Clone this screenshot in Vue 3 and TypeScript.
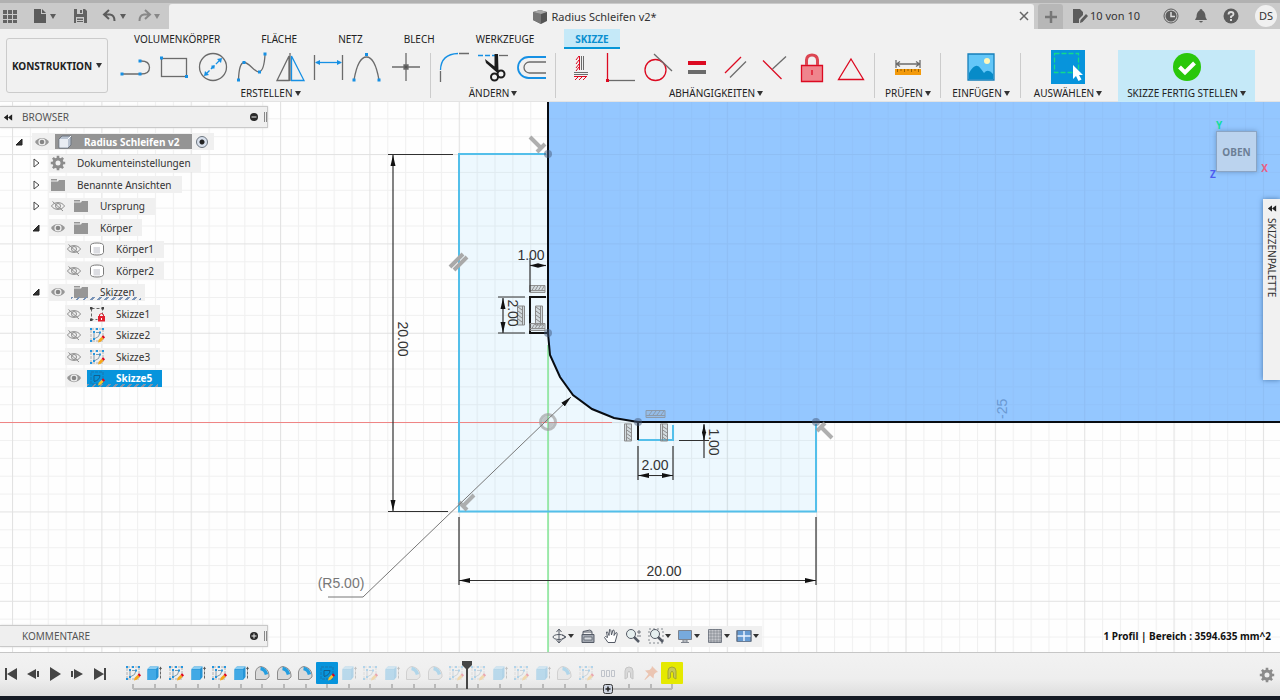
<script setup lang="ts">
import { ref } from 'vue'

interface Tool { id: string; label: string }
interface Group { id: string; label: string; tools: Tool[] }
interface TreeRow {
  label: string
  level: number
  toggle?: 'open' | 'closed'
  eye?: 'eye' | 'eye-off'
  icon: string
  state?: 'root' | 'active' | 'pending'
}
interface Step { kind: string; faded?: boolean; state?: 'current' | 'warning' }

const tabs = ['VOLUMENKÖRPER', 'FLÄCHE', 'NETZ', 'BLECH', 'WERKZEUGE', 'SKIZZE']
const activeTab = ref('SKIZZE')

const groups: Group[] = [
  {
    id: 'create', label: 'ERSTELLEN', tools: [
      { id: 'line', label: 'Linie' }, { id: 'rect', label: 'Rechteck' },
      { id: 'circle', label: 'Kreis' }, { id: 'spline', label: 'Spline' },
      { id: 'mirror', label: 'Spiegeln' }, { id: 'dim', label: 'Bemaßung' },
      { id: 'conic', label: 'Kegelschnitt' }, { id: 'point', label: 'Punkt' },
    ],
  },
  {
    id: 'modify', label: 'ÄNDERN', tools: [
      { id: 'round', label: 'Abrunden' }, { id: 'trim', label: 'Stutzen' }, { id: 'offset', label: 'Versatz' },
    ],
  },
  {
    id: 'constraints', label: 'ABHÄNGIGKEITEN', tools: [
      { id: 'horver', label: 'Horizontal/Vertikal' }, { id: 'coincident', label: 'Koinzident' },
      { id: 'tangent', label: 'Tangential' }, { id: 'equal', label: 'Gleich' },
      { id: 'parallel', label: 'Parallel' }, { id: 'perp', label: 'Lotrecht' },
      { id: 'lock', label: 'Fixieren' }, { id: 'midpoint', label: 'Mittelpunkt' },
    ],
  },
  { id: 'inspect', label: 'PRÜFEN', tools: [{ id: 'measure', label: 'Messen' }] },
  { id: 'insert', label: 'EINFÜGEN', tools: [{ id: 'image', label: 'Bild' }] },
  { id: 'select', label: 'AUSWÄHLEN', tools: [{ id: 'select', label: 'Auswahl' }] },
  { id: 'finish', label: 'SKIZZE FERTIG STELLEN', tools: [{ id: 'finish', label: 'Fertig' }] },
]

const tree: TreeRow[] = [
  { label: 'Radius Schleifen v2', level: 0, toggle: 'open', eye: 'eye', icon: 'component', state: 'root' },
  { label: 'Dokumenteinstellungen', level: 1, toggle: 'closed', icon: 'gear' },
  { label: 'Benannte Ansichten', level: 1, toggle: 'closed', icon: 'folder' },
  { label: 'Ursprung', level: 1, toggle: 'closed', eye: 'eye-off', icon: 'folder' },
  { label: 'Körper', level: 1, toggle: 'open', eye: 'eye', icon: 'folder' },
  { label: 'Körper1', level: 2, eye: 'eye-off', icon: 'body' },
  { label: 'Körper2', level: 2, eye: 'eye-off', icon: 'body' },
  { label: 'Skizzen', level: 1, toggle: 'open', eye: 'eye', icon: 'folder', state: 'pending' },
  { label: 'Skizze1', level: 2, eye: 'eye-off', icon: 'sketch-lock' },
  { label: 'Skizze2', level: 2, eye: 'eye-off', icon: 'sketch' },
  { label: 'Skizze3', level: 2, eye: 'eye-off', icon: 'sketch' },
  { label: 'Skizze5', level: 2, eye: 'eye', icon: 'sketch-dark', state: 'active' },
]

const steps: Step[] = [
  ...['sketch', 'extrude', 'sketch', 'extrude', 'sketch', 'extrude', 'fillet', 'fillet', 'fillet'].map((kind) => ({ kind })),
  { kind: 'sketch-dark', state: 'current' as const },
  ...['extrude', 'sketch', 'extrude', 'fillet', 'fillet', 'sketch', 'sketch', 'extrude', 'sketch', 'extrude', 'fillet', 'sketch', 'pattern', 'arch', 'pin'].map((kind) => ({ kind, faded: true })),
  { kind: 'arch', state: 'warning' as const },
]

const players = [
  { label: 'Zum Anfang', d: 'M4 4h2v12H4zM16 4v12L6 10z' },
  { label: 'Schritt zurück', d: 'M13 5v10L4 10zM14 7h2v6h-2z' },
  { label: 'Wiedergabe', d: 'M5 3v14l11-7z' },
  { label: 'Schritt vor', d: 'M7 5v10l9-5zM4 7h2v6H4z' },
  { label: 'Zum Ende', d: 'M5 4v12l10-6zM15 4h2v12h-2z' },
]

const navTools = [
  { id: 'orbit', label: 'Orbit', menu: true },
  { id: 'look', label: 'Ansehen', menu: false },
  { id: 'pan', label: 'Pan', menu: false },
  { id: 'zoom', label: 'Zoom', menu: false },
  { id: 'fit', label: 'Einpassen', menu: true },
  { id: 'display', label: 'Anzeige', menu: true },
  { id: 'grid', label: 'Raster', menu: true },
  { id: 'views', label: 'Ansichtsfenster', menu: true },
]
const component = ref(true)
</script>

<template>
  <div class="app">
    <svg class="sprites" aria-hidden="true">
      <symbol id="eye" viewBox="0 0 16 16">
        <path d="M1 8C4 2.500 12 2.500 15 8C12 13.500 4 13.500 1 8Z" fill="#979797" /><circle cx="8" cy="8" r="3.600" fill="#efefef" /><circle cx="8" cy="8" r="2.300" fill="#858585" />
      </symbol>
      <symbol id="eye-off" viewBox="0 0 16 16">
        <g fill="none" stroke="#8d8d8d"><path d="M1.500 8C4 3.500 12 3.500 14.500 8C12 12.500 4 12.500 1.500 8Z" /><circle cx="8" cy="8" r="2.500" /><path d="M2.500 3.500L13 13" /></g>
      </symbol>
      <symbol id="folder" viewBox="0 0 16 16"><path d="M1 2h6v1.500H1zM1 4.500h7l1-1.500h6v11H1z" fill="#969696" /></symbol>
      <symbol id="gear" viewBox="0 0 16 16">
        <circle cx="8" cy="8" r="4" fill="none" stroke="#8c8c8c" stroke-width="3" />
        <path d="M8 .8v3M8 12.200v3M.8 8h3M12.200 8h3M2.900 2.900L5 5M11 11l2.100 2.100M13.100 2.900L11 5M5 11l-2.100 2.100" stroke="#8c8c8c" stroke-width="2.600" />
      </symbol>
      <symbol id="component" viewBox="0 0 16 16">
        <path d="M2 5l3-3h9v9l-3 3H2z" fill="#b9c3d1" stroke="#6f7680" /><path d="M2.500 5h8.500v8.500H2.500z" fill="#e9edf3" /><path d="M11 5l3-3" stroke="#fff" />
      </symbol>
      <symbol id="body" viewBox="0 0 16 16">
        <path d="M1.500 4.500Q2 2 8 2t6.500 2.500v7Q14 14 8 14t-6.500-2.500z" fill="#fff" stroke="#7c7c7c" /><path d="M4.500 6H11v6.500H4.500z" fill="#dcdde2" />
      </symbol>
      <symbol id="sketch" viewBox="0 0 16 16">
        <rect x="2" y="2" width="12" height="12" fill="none" stroke="#b0b0b0" stroke-dasharray="3 1" />
        <path d="M5 11V6M7 5.500h4Q10.500 10.500 6 11.500" fill="none" stroke="#8299a8" />
        <path d="M1 1h2v2H1zM13 1h2v2h-2zM1 13h2v2H1zM7 1h2v2H7zM4 4h2v2H4zM10 4.500h2v2h-2zM4 11h2v2H4z" fill="#2496e0" />
        <path d="M9 15.500l.7-2.800 3-3 2 2-3 3z" fill="#f6a81c" /><path d="M12.700 9.700l2 2 1.300-1.500-2-2z" fill="#e2001a" />
      </symbol>
      <symbol id="sketch-dark" viewBox="0 0 16 16">
        <rect x="2" y="2" width="12" height="12" fill="none" stroke="#1976ae" stroke-dasharray="3 1" />
        <path d="M5 11V5.500h6Q10.500 10.500 5 11.500" fill="none" stroke="#155e8b" />
        <path d="M9 15.500l.7-2.800 3-3 2 2-3 3z" fill="#f8c22c" /><path d="M12.700 9.700l2 2 1.300-1.500-2-2z" fill="#e2001a" />
      </symbol>
      <symbol id="sketch-lock" viewBox="0 0 16 16">
        <path d="M2.500 2.500h11v6M2.500 2.500v11h6" fill="none" stroke="#666" stroke-dasharray="3 2" />
        <path d="M1 1h2.500v2.500H1zM12.500 1H15v2.500h-2.500zM1 12.500h2.500V15H1z" fill="#444" />
        <rect x="9" y="10" width="7" height="5.500" fill="#e2202f" /><path d="M10.500 10V8.500q2-2 4 0V10" fill="none" stroke="#e2202f" /><path d="M12.500 12v2" stroke="#fff" />
      </symbol>
      <symbol id="extrude" viewBox="0 0 16 16">
        <path d="M1.500 4L4 1.500h8.500V12L10 15H1.500z" fill="#2594d6" /><path d="M1.500 4.500H10V15H1.500z" fill="#41a9e5" /><path d="M1.500 4L4 1.500h8.500L10 4z" fill="#8bcdf1" />
        <path d="M14.500 13.500V3" stroke="#666" stroke-dasharray="3 1" /><path d="M13 4l1.500-2.500L16 4z" fill="#555" />
      </symbol>
      <symbol id="fillet" viewBox="0 0 16 16">
        <path d="M1.500 14.500V7Q2.500 2 7 1.500Q14.500 3 15 10v2l-3 2.500z" fill="#dadada" stroke="#8d8d8d" /><path d="M6.500 3.500Q11 4 12.500 9.500" fill="none" stroke="#249ee0" stroke-width="3.500" />
      </symbol>
      <symbol id="pattern" viewBox="0 0 16 16"><path d="M1.500 5.500h3v6h-3zM6.500 5.500h3v6h-3zM11.500 5.500h3v6h-3z" fill="none" stroke="#526078" /></symbol>
      <symbol id="arch" viewBox="0 0 16 16"><path d="M4 14V6q0-4 4-4t4 4v8l-2.500-1.500V8L8 6 6.500 8v4.500z" fill="#aaa" stroke="#666" /></symbol>
      <symbol id="pin" viewBox="0 0 16 16"><path d="M9 1l6 6-2 .5-2 2-.5 4L7 10.500 2 15l-.5-.5L5.500 9 2 5.500 6.500 5l2-2z" fill="#e4672a" /></symbol>
      <symbol id="rewind" viewBox="0 0 12 8"><path d="M6 0v8L1 4zM11 0v8L6 4z" fill="#222" /></symbol>
    </svg>

    <header class="titlebar">
      <nav class="quick" aria-label="Schnellzugriff">
        <button aria-label="Datengruppe"><svg viewBox="0 0 20 20"><path d="M3 4h4v4H3zM8 4h4v4H8zM13 4h4v4h-4zM3 9h4v4H3zM8 9h4v4H8zM13 9h4v4h-4zM3 14h4v3H3zM8 14h4v3H8zM13 14h4v3h-4z" fill="#636363" /></svg></button>
        <button aria-label="Datei" class="wide"><svg viewBox="0 0 20 20"><path d="M4 3h7v5h5v9H4z" fill="#5c5c5c" /><path d="M12 3l4 4h-4z" fill="#5c5c5c" /></svg><i class="caret" /></button>
        <button aria-label="Speichern"><svg viewBox="0 0 20 20"><path d="M4 3h11l2 2v12H4z" fill="#626262" /><path d="M7 3h6v5H7zM6 11h8v6H6z" fill="#cacaca" /><path d="M10 4h2v3h-2zM7 12.500h6v1.500H7zM7 15h6v1H7z" fill="#626262" /></svg></button>
        <button aria-label="Rückgängig" class="wide"><svg viewBox="0 0 20 20"><path d="M9 4L4 8.500L9 13M4.500 8.500H10Q14.500 9 14.500 15" fill="none" stroke="#5c5c5c" stroke-width="2" /></svg><i class="caret" /></button>
        <button aria-label="Wiederholen" class="wide dim"><svg viewBox="0 0 20 20"><path d="M11 4l5 4.500L11 13M15.500 8.500H10Q5.500 9 5.500 15" fill="none" stroke="#5c5c5c" stroke-width="2" /></svg><i class="caret" /></button>
      </nav>
      <div class="doc">
        <svg class="cube" viewBox="0 0 16 16"><path d="M1 3l7-2 7 2v9l-6 3-8-4z" fill="#555" /><path d="M1 3l8 2v10l-8-4z" fill="#777" /><path d="M1 3l7-2 7 2-6 2z" fill="#a8a8a8" /></svg>
        <span>Radius Schleifen v2*</span>
        <button class="close" aria-label="Schließen"><svg viewBox="0 0 10 10"><path d="M1 1l8 8M9 1L1 9" stroke="#666" stroke-width="1.500" /></svg></button>
      </div>
      <button class="add" aria-label="Neues Dokument"><svg viewBox="0 0 12 12"><path d="M6 0v12M0 6h12" stroke="#777" stroke-width="2.500" /></svg></button>
      <div class="account">
        <button class="jobs"><svg viewBox="0 0 16 16"><path d="M1 1h7l3 3v3l-4 4v4H1z" fill="#5c5c5c" /><path d="M8 15l.5-3L14 6l2 2-5.500 6zM12 4l3 3" fill="#5c5c5c" /></svg>10 von 10</button>
        <button aria-label="Verlauf"><svg viewBox="0 0 16 16"><circle cx="8" cy="8" r="7" fill="none" stroke="#5c5c5c" /><circle cx="8" cy="8" r="5.500" fill="#5c5c5c" /><path d="M8 4v4.500h4" fill="none" stroke="#ddd" stroke-width="1.500" /></svg></button>
        <button aria-label="Benachrichtigungen"><svg viewBox="0 0 16 16"><path d="M8 1q1.500 0 1.500 1.500Q12.500 4 12.500 9L14 12H2l1.500-3Q3.500 4 6.500 2.500Q6.500 1 8 1zM6 13h4q-2 3-4 0z" fill="#5c5c5c" /></svg></button>
        <button aria-label="Hilfe"><svg viewBox="0 0 16 16"><circle cx="8" cy="8" r="7.500" fill="#5c5c5c" /><path d="M5.500 6.500Q5.500 4 8 4t2.500 2.200Q10.500 7.500 8 8.500V10" fill="none" stroke="#ddd" stroke-width="1.800" /><path d="M7 11h2v2H7z" fill="#ddd" /></svg></button>
        <button class="avatar">DS</button>
      </div>
    </header>

    <section class="ribbon">
      <button class="workspace-switch">KONSTRUKTION<i class="caret" /></button>
      <div class="ribbon-main">
        <nav class="tabs" role="tablist">
          <button v-for="t in tabs" :key="t" role="tab" :aria-selected="t === activeTab" :class="{ on: t === activeTab }" @click="activeTab = t">{{ t }}</button>
        </nav>
        <div class="groups">
          <div v-for="g in groups" :key="g.id" class="group" :class="g.id">
            <div class="tools">
              <button v-for="t in g.tools" :key="t.id" :aria-label="t.label">
                <svg viewBox="0 0 34 34" fill="none" stroke="#6b6b6b" stroke-width="1.300">
                  <template v-if="t.id === 'line'"><path d="M4 24H22M23 11Q31.500 11 31.500 17.500T23 24" /><path class="dot" d="M2.500 22.500h3v3h-3zM20.500 22.500h3v3h-3zM20.500 9.500h3v3h-3z" /></template>
                  <template v-else-if="t.id === 'rect'"><rect x="4.500" y="8.500" width="25" height="18" /><path class="dot" d="M3 6.500h3v3H3zM28 25h3v3h-3z" /></template>
                  <template v-else-if="t.id === 'circle'"><circle cx="17" cy="17" r="13.500" /><path class="blue" stroke-dasharray="5 2" d="M10 24L24 10" /><path class="dot" d="M15.500 15.500h3v3h-3zM26 8l-1 5-4-4zM8 26l1-5 4 4z" /></template>
                  <template v-else-if="t.id === 'spline'"><path d="M4.500 30Q5 13 10 12.500C15 12 20 22 25 22Q30 21 31 5" /><path class="dot" d="M3 28.500h3v3H3zM8.500 11h3v3h-3zM24 20.500h3v3h-3zM29.500 2.500h3v3h-3z" /></template>
                  <template v-else-if="t.id === 'mirror'"><path d="M4 30.500L16 6v24.500zM17 3v28" /><path class="blue" d="M18.500 6L31 30.500H18.500z" /></template>
                  <template v-else-if="t.id === 'dim'"><path d="M3.500 5v25M31.500 5v25" /><path class="blue" d="M5 12.500h25" /><path class="dot" d="M4 12.500l5-2.500v5zM31 12.500L26 10v5z" /></template>
                  <template v-else-if="t.id === 'conic'"><path d="M4 30Q8 7 16.500 7T29 30" /><path class="dot" d="M2.500 28.500h3v3h-3zM27.500 28.500h3v3h-3zM15 3h3v3h-3z" /></template>
                  <template v-else-if="t.id === 'point'"><path d="M3 17h28M17 3v28" /><path d="M15 15h4v4h-4z" fill="#555" /></template>
                  <template v-else-if="t.id === 'round'"><path d="M3.500 21v11M22 3.500h10" /><path class="blue" d="M3.500 20Q4 4 21 3.500" /></template>
                  <template v-else-if="t.id === 'trim'"><path class="blue" d="M2 5.500h18" stroke-dasharray="5 2" /><path d="M23 5.500h9" /><path d="M18.500 4H22l.5 17-4-2zM9 9l14 11-1.500 3L10 13z" fill="#1c1c1c" stroke="none" /><g stroke="#1c1c1c" stroke-width="2"><circle cx="18.500" cy="27" r="3.500" /><circle cx="25" cy="24" r="3.500" /></g></template>
                  <template v-else-if="t.id === 'offset'"><path class="blue" stroke-width="1.800" d="M31 7H13.500a10.500 10.500 0 0 0 0 21H31" /><path d="M31 12H14.500a5.500 5.500 0 0 0 0 11H31" /></template>
                  <template v-else-if="t.id === 'horver'"><path stroke-width="1" d="M17.500 6v14M19.500 6v14M10 22.500h14M10 24.500h14" /><path class="red" stroke-width="1" d="M15.500 6v14M12 10l3-4M12 14l3-4M12 18l3-4M12 21l3-4M10 26.500h13M11 30l3-3M15 30l3-3M19 30l3-3" /></template>
                  <template v-else-if="t.id === 'coincident'"><path d="M5 30.500h27" /><path class="red" d="M4.500 3v27" /><path d="M3 29h3v3H3z" fill="#dc0a21" stroke="none" /></template>
                  <template v-else-if="t.id === 'tangent'"><circle class="red" cx="14.500" cy="20" r="10.500" /><path d="M13 4l18 17" /></template>
                  <template v-else-if="t.id === 'equal'"><path d="M8 13h18" stroke="#dc0a21" stroke-width="4" /><path d="M8 22h18" stroke-width="4" /></template>
                  <template v-else-if="t.id === 'parallel'"><path class="red" d="M7 23L23 7" /><path d="M12 27.500L28 11.500" /></template>
                  <template v-else-if="t.id === 'perp'"><path class="red" d="M6 10.500L24.500 29" /><path d="M15.500 19L29 6.500" /></template>
                  <template v-else-if="t.id === 'lock'"><path class="red" d="M6.500 15.500h21v16h-21z" fill="#ef858d" /><path d="M11.500 15v-5Q12 5 17 5t5.500 5v5" stroke="#dc4652" stroke-width="3" /><path class="red" d="M17 20v5" /></template>
                  <template v-else-if="t.id === 'midpoint'"><path class="red" d="M17 9L29.500 29.500h-25z" /></template>
                  <template v-else-if="t.id === 'measure'"><path d="M5 10v8M29 10v8M5 14h24M9 11.500L5.500 14 9 16.500M25 11.500L28.500 14 25 16.500" /><path d="M4 19h26v6H4z" fill="#f39a0b" stroke="none" /><path d="M6.500 19v3M10 19v2M13.500 19v3M17 19v2M20.500 19v3M24 19v2M27.500 19v3" stroke="#9a6000" stroke-width="1" /></template>
                  <template v-else-if="t.id === 'image'"><path d="M4 4h26v26H4z" fill="#64c7f8" stroke="#167fb9" /><circle cx="23" cy="11" r="3" fill="#fff7ba" stroke="none" /><path d="M5 23Q12 11 17 19L20 23Q24 18 29 24v5H5z" fill="#078bc8" stroke="none" /></template>
                  <template v-else-if="t.id === 'select'"><path d="M0 0h34v34H0z" fill="#0794dc" stroke="none" /><path d="M3.500 3.500h24v19h-24z" stroke="#13d98b" stroke-dasharray="5 2" /><path d="M22 15v14l3-3 2.500 5 3-1.500-2.500-4.500h4z" fill="#fff" stroke="none" /></template>
                  <template v-else><circle cx="17" cy="17" r="14" fill="#2ac70b" stroke="none" /><path d="M9.500 17l5.500 5.500L24.500 13" stroke="#fff" stroke-width="4" /></template>
                </svg>
              </button>
            </div>
            <button class="group-label">{{ g.label }}<i class="caret" /></button>
          </div>
        </div>
      </div>
    </section>

    <main class="workspace">
      <svg class="drawing" viewBox="0 102 1280 550" preserveAspectRatio="xMinYMin slice" role="img" aria-label="Skizze">
        <defs>
          <pattern id="minor" x="12" y="64.700" width="17.870" height="17.870" patternUnits="userSpaceOnUse"><path d="M0 .5H17.870M.5 0V17.870" stroke="#000" stroke-opacity=".055" /></pattern>
          <pattern id="major" x="12" y="64.700" width="89.350" height="89.350" patternUnits="userSpaceOnUse"><path d="M0 .5H89.350M.5 0V89.350" stroke="#000" stroke-opacity=".06" /></pattern>
          <marker id="arrow" viewBox="0 0 11 6" refX="11" refY="3" markerWidth="11" markerHeight="6" markerUnits="userSpaceOnUse" orient="auto-start-reverse"><path d="M0 .5L11 3L0 5.500z" fill="#111" /></marker>
          <marker id="arrow-small" viewBox="0 0 11 6" refX="11" refY="3" markerWidth="8" markerHeight="5" markerUnits="userSpaceOnUse" orient="auto-start-reverse"><path d="M0 0L11 3L0 6z" fill="#111" /></marker>
          <g id="perp" fill="none" stroke="#9b9b9b" stroke-opacity=".8" stroke-width="4"><path d="M-7 -6L4 5M0 9L8 1" /></g>
          <g id="hatch"><rect y="0" width="19" height="8" fill="#999" fill-opacity=".3" /><path d="M0 .5h19v7H0zM0 2.500h19M1 7l3-4M5 7l3-4M9 7l3-4M13 7l3-4" fill="none" stroke="#888" /></g>
        </defs>
        <rect x="0" y="102" width="1280" height="550" fill="#fefefe" />
        <rect x="459" y="154" width="357" height="357" fill="#edf8fe" />
        <path d="M548 102V333L550 355L560 377L573 395L592 409L614 418L638 422H1280V102Z" fill="#95c7ff" />
        <rect x="0" y="102" width="1280" height="550" fill="url(#minor)" />
        <rect x="0" y="102" width="1280" height="550" fill="url(#major)" />
        <path d="M548 102V333L550 355L560 377L573 395L592 409L614 418L638 422H1280V102Z" fill="#95c7ff" fill-opacity=".6" />
        <path d="M0 422.500H612" stroke="#ef8585" />
        <path d="M548 345V652" stroke="#83e796" stroke-width="1.500" />
        <path d="M546 154H459V511.500H816V424M638 440H673V425" fill="none" stroke="#53bfea" stroke-width="2" />
        <path d="M548 102V333L550 355L560 377L573 395L592 409L614 418L638 422H1280" fill="none" stroke="#080c12" stroke-width="2" />
        <path d="M546 297H530V333H547M638 422V440" fill="none" stroke="#111" stroke-width="2" />
        <g fill="#46597a" fill-opacity=".5"><circle cx="548" cy="154" r="4" /><circle cx="548" cy="333" r="4" /><circle cx="638" cy="422" r="4" /><circle cx="816" cy="422" r="4" /></g>
        <circle cx="548" cy="422" r="7.500" fill="none" stroke="#999" stroke-opacity=".65" stroke-width="3" />
        <path d="M548 422V416A6 6 0 0 0 542 422zM548 422v6a6 6 0 0 0 6-6z" fill="#999" fill-opacity=".55" />
        <use href="#perp" x="537" y="143" />
        <use href="#perp" transform="translate(825 432) rotate(180)" />
        <use href="#perp" transform="translate(468 502) rotate(90)" />
        <path d="M450 267L463 254M454 270L467 257" stroke="#a9a9a9" stroke-width="4" />
        <use href="#hatch" transform="translate(545 293) rotate(180) scale(.8 1)" />
        <use href="#hatch" transform="translate(525 306) rotate(90)" />
        <use href="#hatch" transform="translate(543 306) rotate(90)" />
        <use href="#hatch" transform="translate(545 331) rotate(180) scale(.8 1)" />
        <use href="#hatch" transform="translate(624 441) rotate(-90) scale(.9 1)" />
        <use href="#hatch" transform="translate(660 441) rotate(-90) scale(.9 1)" />
        <use href="#hatch" transform="translate(665 418) rotate(180)" opacity=".7" />
        <g fill="none" stroke="#303030" stroke-width="1.200">
          <path d="M388 154.500H453M388 511.500H448M459 517V585M816 517V585M498 297H525M498 333H525M530 258V292M638 446V480M673 446V480M679 440.500H709M704 424V458" />
          <g marker-start="url(#arrow)" marker-end="url(#arrow)">
            <path d="M393 155V511" /><path d="M459 580.500H816" /><path d="M503 298V333" /><path d="M638 475.500H673" />
          </g>
          <path d="M530 265.500H546" marker-start="url(#arrow-small)" marker-end="url(#arrow-small)" />
          <path d="M704 440V425" marker-start="url(#arrow-small)" marker-end="url(#arrow-small)" />
        </g>
        <path d="M328 597H363L571 397" fill="none" stroke="#777" marker-end="url(#arrow)" />
        <g class="dims">
          <text x="664" y="576" text-anchor="middle">20.00</text>
          <text x="655" y="470" text-anchor="middle">2.00</text>
          <text x="531" y="260" text-anchor="middle">1.00</text>
          <text x="341" y="588" text-anchor="middle" class="soft">(R5.00)</text>
          <text transform="translate(398 339) rotate(90)" text-anchor="middle">20.00</text>
          <text transform="translate(508 313) rotate(90)" text-anchor="middle">2.00</text>
          <text transform="translate(709 442) rotate(90)" text-anchor="middle">1.00</text>
          <text transform="translate(1007 419) rotate(-90)" class="mark">-25</text>
        </g>
      </svg>

      <div class="viewcube">
        <button>OBEN</button>
        <span class="ax y">Y</span><span class="ax x">X</span><span class="ax z">Z</span>
      </div>
      <button class="palette"><svg viewBox="0 0 12 8"><use href="#rewind" /></svg><span>SKIZZENPALETTE</span></button>

      <div class="overlay">
        <aside class="browser">
          <div class="panel">
            <button aria-label="Einklappen"><svg class="rew" viewBox="0 0 12 8"><use href="#rewind" /></svg></button>
            <span>BROWSER</span>
            <button class="round" aria-label="Minimieren"><svg viewBox="0 0 10 10"><circle cx="5" cy="5" r="4" fill="#292929" /><path d="M2.500 5h5" stroke="#eee" /></svg></button><i class="grip" />
          </div>
          <ul class="tree">
            <li v-for="r in tree" :key="r.label" :class="['lv' + r.level, r.state]">
              <button class="toggle" v-if="r.toggle" :aria-label="r.label + ' umschalten'">
                <svg viewBox="0 0 10 10"><path v-if="r.toggle === 'open'" d="M8 2v6H2z" fill="#333" stroke="#222" /><path v-else d="M3 1v8l5-4z" fill="#fff" stroke="#444" /></svg>
              </button>
              <span v-else class="toggle" />
              <div class="node">
                <button v-if="r.eye" class="eye" :aria-label="r.label + ' Sichtbarkeit'"><svg viewBox="0 0 16 16"><use :href="'#' + r.eye" /></svg></button>
                <span class="name" :class="{ noeye: !r.eye }"><svg viewBox="0 0 16 16"><use :href="'#' + r.icon" /></svg><span>{{ r.label }}</span></span>
                <input v-if="r.state === 'root'" type="checkbox" v-model="component" aria-label="Komponente aktivieren" />
              </div>
            </li>
          </ul>
        </aside>
        <div class="bottom">
          <div class="panel">
            <span>KOMMENTARE</span>
            <button class="round" aria-label="Kommentar hinzufügen"><svg viewBox="0 0 10 10"><circle cx="5" cy="5" r="4" fill="#292929" /><path d="M2.500 5h5M5 2.500v5" stroke="#eee" /></svg></button><i class="grip" />
          </div>
          <nav class="navbar" aria-label="Navigation">
            <button v-for="n in navTools" :key="n.id" :aria-label="n.label" :class="{ menu: n.menu }">
              <svg viewBox="0 0 16 16" fill="none" stroke="#555b66">
                <template v-if="n.id === 'orbit'"><ellipse cx="8" cy="9" rx="6" ry="2.500" /><path d="M8 2v12M5.500 4L8 1l2.500 3M5.500 12L8 15l2.500-3M11 7l4 2-4 2" /></template>
                <template v-else-if="n.id === 'look'"><path d="M2 6.500h12v8H2z" fill="#a1a6af" /><path d="M4 9h8v3H4z" fill="#d5d8de" stroke-width=".7" /><path d="M3 6V3.500l7-1.500 2 1.500V6M3 4h9" /></template>
                <template v-else-if="n.id === 'pan'"><path d="M5 14.500L1.500 9.500Q2 7.500 4.500 9.500L3.500 4Q4.500 2.500 6 7.500L6.500 1.500q1.500-1 2 5.500L10 2q2-.5 1 5.500L13 4.500q2 0 .5 4.500L12 14.500z" fill="#fff" /></template>
                <template v-else-if="n.id === 'zoom'"><circle cx="6" cy="6" r="4.500" fill="#e6efef" /><path d="M9 9l5 5" stroke-width="2.500" /><path d="M12 4h4M14 2v4M12 8h4" stroke-width=".8" /></template>
                <template v-else-if="n.id === 'fit'"><path d="M1 1h14v14H1z" stroke-dasharray="2 2" stroke-width=".7" /><circle cx="7" cy="6" r="4.500" fill="#e6efef" /><path d="M10 9l5 5" stroke-width="2.500" /></template>
                <template v-else-if="n.id === 'display'"><path d="M1.500 2.500h13v9h-13z" fill="#77aadd" stroke="#7d838d" /><path d="M6 12h4v2H6zM4 14.500h8" stroke="#7d838d" /></template>
                <template v-else-if="n.id === 'grid'"><path d="M1.500 1.500h13v13h-13z" fill="#c5c7cd" stroke="#7d838d" /><path d="M4 1v14M7 1v14M10 1v14M13 1v14M1 4h14M1 7h14M1 10h14M1 13h14" stroke-width=".4" /></template>
                <template v-else><path d="M1 2.500h14v11H1z" fill="#669bd2" /><path d="M8 3v11M1 8h14" stroke="#eaf4ff" stroke-width="1.500" /><path d="M1 2.500h14v11H1z" stroke="#6a7c94" /></template>
              </svg><i v-if="n.menu" class="caret" />
            </button>
          </nav>
          <output class="status">1 Profil | Bereich : 3594.635 mm^2</output>
        </div>
      </div>
    </main>

    <footer class="timeline">
      <div class="player"><button v-for="p in players" :key="p.label" :aria-label="p.label"><svg viewBox="0 0 20 20"><path :d="p.d" fill="#454545" /></svg></button></div>
      <div class="steps">
        <button v-for="(s, i) in steps" :key="i" :class="[s.state, { faded: s.faded, folded: s.kind === 'pattern' }]" :aria-label="'Schritt ' + (i + 1)">
          <span class="box"><svg viewBox="0 0 16 16"><use :href="'#' + s.kind" /></svg></span>
          <svg v-if="s.kind === 'pattern'" class="plus" viewBox="0 0 10 10"><rect x=".5" y=".5" width="9" height="9" rx="2" fill="#ccd3df" stroke="#333" /><path d="M5 2.500v5M2.500 5h5" stroke="#222" stroke-width="1.500" /></svg>
        </button>
        <svg class="marker" viewBox="0 0 12 28"><path d="M1 0h10v4L7 8v20H5V8L1 4z" fill="#454545" /></svg>
      </div>
      <button class="settings" aria-label="Einstellungen"><svg viewBox="0 0 16 16"><use href="#gear" /></svg></button>
    </footer>
  </div>
</template>

<style>
body { margin: 0; }
</style>

<style scoped>
* { box-sizing: border-box; }
.app { display: flex; flex-direction: column; min-height: 100vh; font: 10px/16px "Noto Sans", "Open Sans", sans-serif; color: #333; background: #f1f1f1; overflow: hidden; }
.sprites { position: absolute; width: 0; height: 0; }
button { display: flex; align-items: center; justify-content: center; padding: 0; border: 0; background: none; font: inherit; color: inherit; white-space: nowrap; }
svg { display: block; flex: none; }
.caret { flex: none; width: 0; height: 0; border: 3px solid transparent; border-top: 5px solid #333; border-bottom: 0; }

.titlebar { display: flex; height: 29px; border-top: 3px solid #b1b1b1; background: #cacaca; }
.quick { display: flex; align-items: center; width: 169px; }
.quick svg { width: 20px; height: 20px; }
.quick button { width: 30px; justify-content: flex-start; }
.quick button:nth-child(2) { width: 40px; }
.quick .wide { width: 34px; }
.quick .caret { border-top-color: #5c5c5c; }
.quick .dim { opacity: .6; }
.doc { position: relative; display: flex; flex: 1; align-items: center; justify-content: center; gap: 3px; margin-top: 1px; padding-right: 14px; border-radius: 3px 3px 0 0; background: #f1f1f1; font-size: 11px; }
.cube { width: 16px; height: 16px; }
.close { position: absolute; right: 5px; top: 7px; }
.close svg { width: 10px; height: 10px; }
.add { width: 25px; margin: 1px 9px 0 4px; border-radius: 3px 3px 0 0; background: #b7b7b7; }
.add svg { width: 12px; height: 12px; }
.account { display: flex; align-items: center; gap: 14px; padding-right: 3px; }
.account svg { width: 16px; height: 16px; }
.jobs { gap: 2px; margin-right: 9px; font-size: 11px; }
.account .avatar { width: 22px; height: 22px; border-radius: 50%; background: #f0f0f0; font-size: 11px; margin-left: 2px; }

.ribbon { display: flex; height: 73px; background: #f1f1f1; border-bottom: 1px solid #e3e3e3; color: #222; }
.workspace-switch { width: 102px; height: 55px; margin: 9px 6px 0; gap: 4px; border: 1px solid #cbcbcb; border-radius: 3px; font-weight: 700; }
.ribbon-main { flex: 1; }
.tabs { display: flex; height: 21px; gap: 1px; }
.tabs button { height: 20px; padding: 0 20px; }
.tabs .on { padding: 2px 11px 0; margin: 0 9px; border-bottom: 2px solid #0696d7; background: #c5e9f8; color: #0a8fd0; font-weight: 700; }
.groups { display: flex; height: 52px; }
.group { position: relative; display: flex; flex: none; flex-direction: column; align-items: center; }
.group::after { content: ""; position: absolute; right: 0; top: 3px; bottom: 4px; width: 1px; background: #ccc; }
.tools { display: flex; width: 100%; height: 34px; }
.tools button { flex: 1 1 0; }
.tools svg { width: 34px; height: 34px; }
.group-label { height: 18px; gap: 2px; }
.create { width: 317px; padding: 0 6px 0 2px; }
.modify { width: 125px; padding: 0 5px 0 4px; }
.constraints { width: 319px; padding: 0 5px 0 6px; }
.inspect { width: 66px; }
.insert { width: 80px; }
.select { width: 94px; }
.select::after, .finish::after { display: none; }
.finish { width: 137px; margin-left: 3px; background: #c5e9f8; }
.dot { fill: #1690e4; stroke: none; }
.blue { stroke: #1690e4; }
.red { stroke: #dc0a21; }

.workspace { position: relative; display: flex; flex: 1; min-height: 550px; }
.drawing { position: absolute; inset: 0; width: 100%; height: 100%; }
.dims { font: 14px "Liberation Sans", Arial, sans-serif; fill: #333; }
.soft { fill: #777; }
.mark { fill: #6a99d2; }
.viewcube { position: absolute; top: 29px; right: 23px; width: 41px; height: 41px; }
.viewcube button { width: 100%; height: 100%; border: 1px solid #8ba5c4; background: #bbd3ee; box-shadow: 0 0 5px #6c96c6; color: #6c7f96; font-weight: 700; }
.ax { position: absolute; font-weight: 700; line-height: 10px; }
.ax.y { left: 0; top: -11px; color: #12de9b; }
.ax.x { right: -11px; bottom: -1px; color: #e86086; }
.ax.z { left: -6px; bottom: -7px; color: #4d5cf0; }
.palette { position: absolute; right: 0; top: 97px; width: 17px; height: 181px; flex-direction: column; justify-content: flex-start; gap: 6px; padding-top: 6px; background: #f1f1f1; box-shadow: 0 0 5px #4b78aa; }
.palette svg { width: 10px; height: 7px; }
.palette span { writing-mode: vertical-rl; }
.overlay { position: relative; display: flex; flex: 1; flex-direction: column; justify-content: space-between; padding: 4px 0 5px; pointer-events: none; }
.overlay button, .overlay input { pointer-events: auto; }
.panel { display: flex; align-items: center; width: 268px; height: 22px; padding-left: 22px; border: 1px solid #c9c9c9; border-left: 0; background: #efefef; color: #555; box-shadow: 0 0 2px #ddd; }
.browser .panel { padding-left: 3px; }
.browser .panel > span { margin-left: 9px; }
.rew { width: 10px; height: 7px; }
.round { margin-left: auto; }
.round svg { width: 10px; height: 10px; }
.grip { width: 3px; height: 10px; margin: 0 0 0 5px; border: solid #888; border-width: 0 1px; }
.tree { display: grid; grid-auto-rows: 1fr; height: 258px; margin: 3px 0 0; padding: 0; list-style: none; }
.tree li { display: flex; align-items: center; }
.lv0 { padding-left: 14px; }
.lv1 { padding-left: 31px; }
.lv2 { padding-left: 47px; }
.toggle { width: 18px; justify-content: flex-start; }
.toggle svg { width: 10px; height: 10px; }
.node { display: flex; align-items: center; height: 17px; background: #f0f0f0; }
.eye { width: 18px; }
.node svg { width: 16px; height: 16px; }
.name { display: flex; align-items: center; height: 16px; padding: 0 10px 0 6px; }
.name svg { margin-right: 11px; }
.noeye { padding-left: 1px; }
.lv2 .name { height: 17px; margin-left: 4px; padding-left: 2px; }
.root .eye { width: 20px; }
.root .name { height: 15px; margin-left: 3px; padding: 0 13px 0 2px; background: #949494; color: #fff; font-weight: 700; }
.root input { appearance: none; width: 12px; height: 12px; margin: 0 6px 0 4px; border: 1px solid #6c7580; border-radius: 50%; background: radial-gradient(circle, #222 0 2px, #d9e1ed 3px); }
.active .name { background: #0794dc; color: #fff; font-weight: 700; }
.pending .name, .active .name { position: relative; }
.pending .name::after, .active .name::after { content: ""; position: absolute; left: 4px; right: 4px; bottom: 0; height: 3px; background: repeating-linear-gradient(135deg, #7893b7 0 2px, transparent 2px 5px); }
.active .name::after { left: 0; background: repeating-linear-gradient(135deg, #8295ab 0 2px, transparent 2px 5px); }
.bottom { display: flex; align-items: center; }
.navbar { display: flex; align-items: center; justify-content: space-between; width: 213px; height: 21px; margin-left: 281px; padding: 0 3px 0 2px; background: #f0f0f0; }
.navbar button { gap: 1px; }
.navbar svg { width: 16px; height: 16px; }
.navbar .caret { border-width: 4px 3px 0; }
.status { margin-left: auto; padding-right: 9px; color: #111; font-weight: 700; }

.timeline { display: flex; height: 48px; border-top: 1px solid #c6c6c6; border-bottom: 4px solid #151b24; background: linear-gradient(#f2f2f2, #eee 60%, #ddd); }
.player { display: flex; gap: 2px; height: 42px; align-items: center; width: 122px; padding-left: 1px; }
.player svg { width: 20px; height: 20px; }
.steps { position: relative; display: flex; width: 561px; }
.steps::after { content: ""; position: absolute; left: 11px; right: 11px; top: 35px; height: 2px; background: #b9b9b9; }
.steps button { position: relative; flex: 1 1 0; min-width: 0; align-items: flex-start; padding-top: 9px; }
.steps button::after { content: ""; position: absolute; left: 10px; top: 31px; width: 2px; height: 5px; background: #b9b9b9; }
.box { display: flex; flex: none; align-items: center; justify-content: center; width: 22px; height: 22px; border-radius: 1px; }
.box svg { width: 16px; height: 16px; }
.faded .box { opacity: .3; }
.current .box { background: #0794dc; }
.warning .box { background: #e5e900; }
.warning .box svg { opacity: .5; }
.plus { position: absolute; z-index: 1; left: 6px; top: 31px; width: 10px; height: 10px; }
.marker { position: absolute; z-index: 1; left: 339px; top: 8px; width: 12px; height: 28px; }
.settings { margin-left: auto; margin-right: 5px; height: 43px; }
.settings svg { width: 16px; height: 16px; }
</style>
